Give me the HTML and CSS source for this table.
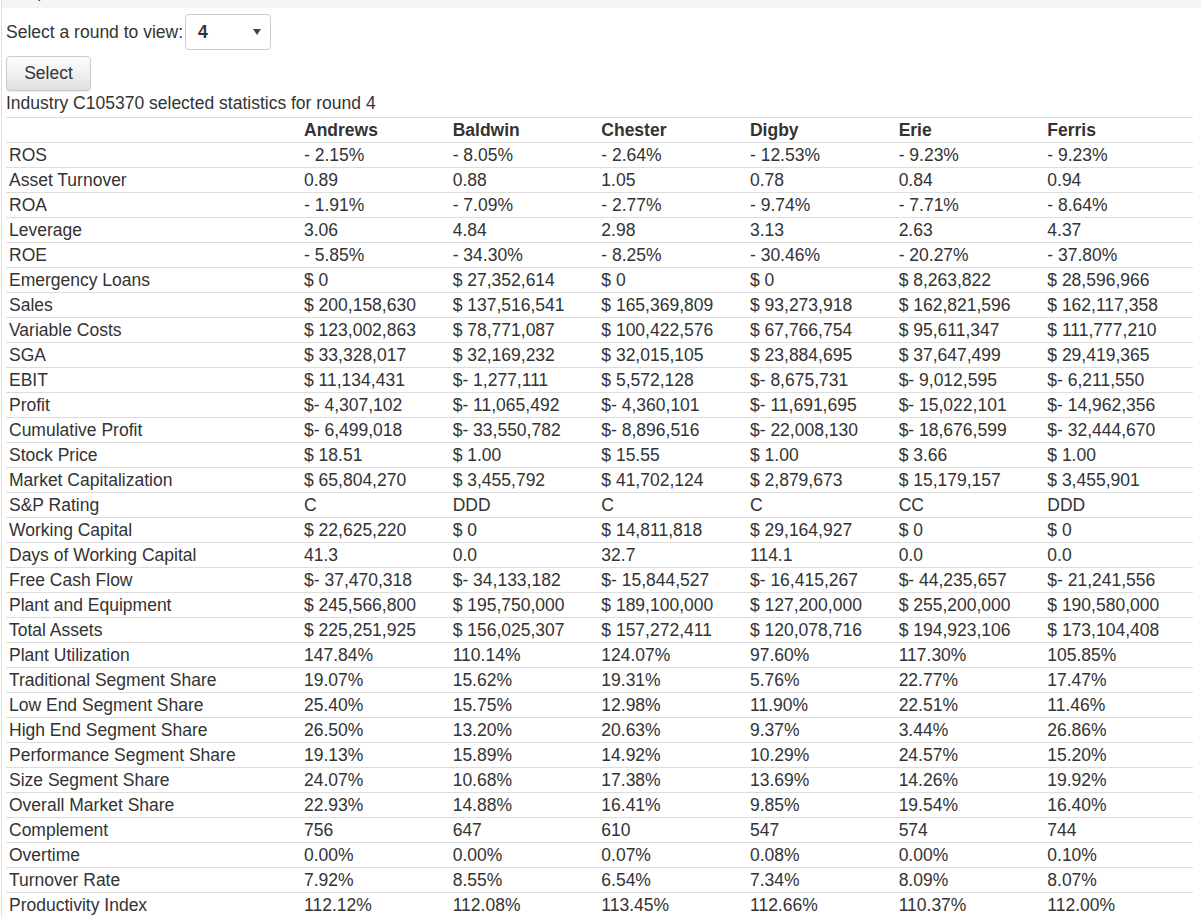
FILE: index.html
```html
<!DOCTYPE html>
<html>
<head>
<meta charset="utf-8">
<title>Industry statistics</title>
<link rel="stylesheet" href="styles.css">
</head>
<body>
<div class="panel">
  <div class="panel-heading"><h3 class="panel-title">Reports</h3></div>
  <div class="panel-body">
    <form class="round-form">
      <div class="round-row">
        <label class="round-label" for="round">Select a round to view:</label>
        <span class="select-wrap">
          <select id="round" class="round-select">
            <option>1</option><option>2</option><option>3</option><option selected>4</option>
          </select>
          <svg class="select-arrow" width="8" height="6" viewBox="0 0 8 6"><path d="M0 0H8L4 6Z" fill="#444"/></svg>
        </span>
      </div>
      <button type="button" class="btn">Select</button>
    </form>
    <div class="caption">Industry C105370 selected statistics for round 4</div>
    <table class="stats">
      <colgroup><col class="col-label"><col><col><col><col><col><col></colgroup>
      <thead>
        <tr><th></th><th>Andrews</th><th>Baldwin</th><th>Chester</th><th>Digby</th><th>Erie</th><th>Ferris</th></tr>
      </thead>
      <tbody>
        <tr><td>ROS</td><td>- 2.15%</td><td>- 8.05%</td><td>- 2.64%</td><td>- 12.53%</td><td>- 9.23%</td><td>- 9.23%</td></tr>
        <tr><td>Asset Turnover</td><td>0.89</td><td>0.88</td><td>1.05</td><td>0.78</td><td>0.84</td><td>0.94</td></tr>
        <tr><td>ROA</td><td>- 1.91%</td><td>- 7.09%</td><td>- 2.77%</td><td>- 9.74%</td><td>- 7.71%</td><td>- 8.64%</td></tr>
        <tr><td>Leverage</td><td>3.06</td><td>4.84</td><td>2.98</td><td>3.13</td><td>2.63</td><td>4.37</td></tr>
        <tr><td>ROE</td><td>- 5.85%</td><td>- 34.30%</td><td>- 8.25%</td><td>- 30.46%</td><td>- 20.27%</td><td>- 37.80%</td></tr>
        <tr><td>Emergency Loans</td><td>$ 0</td><td>$ 27,352,614</td><td>$ 0</td><td>$ 0</td><td>$ 8,263,822</td><td>$ 28,596,966</td></tr>
        <tr><td>Sales</td><td>$ 200,158,630</td><td>$ 137,516,541</td><td>$ 165,369,809</td><td>$ 93,273,918</td><td>$ 162,821,596</td><td>$ 162,117,358</td></tr>
        <tr><td>Variable Costs</td><td>$ 123,002,863</td><td>$ 78,771,087</td><td>$ 100,422,576</td><td>$ 67,766,754</td><td>$ 95,611,347</td><td>$ 111,777,210</td></tr>
        <tr><td>SGA</td><td>$ 33,328,017</td><td>$ 32,169,232</td><td>$ 32,015,105</td><td>$ 23,884,695</td><td>$ 37,647,499</td><td>$ 29,419,365</td></tr>
        <tr><td>EBIT</td><td>$ 11,134,431</td><td>$- 1,277,111</td><td>$ 5,572,128</td><td>$- 8,675,731</td><td>$- 9,012,595</td><td>$- 6,211,550</td></tr>
        <tr><td>Profit</td><td>$- 4,307,102</td><td>$- 11,065,492</td><td>$- 4,360,101</td><td>$- 11,691,695</td><td>$- 15,022,101</td><td>$- 14,962,356</td></tr>
        <tr><td>Cumulative Profit</td><td>$- 6,499,018</td><td>$- 33,550,782</td><td>$- 8,896,516</td><td>$- 22,008,130</td><td>$- 18,676,599</td><td>$- 32,444,670</td></tr>
        <tr><td>Stock Price</td><td>$ 18.51</td><td>$ 1.00</td><td>$ 15.55</td><td>$ 1.00</td><td>$ 3.66</td><td>$ 1.00</td></tr>
        <tr><td>Market Capitalization</td><td>$ 65,804,270</td><td>$ 3,455,792</td><td>$ 41,702,124</td><td>$ 2,879,673</td><td>$ 15,179,157</td><td>$ 3,455,901</td></tr>
        <tr><td>S&amp;P Rating</td><td>C</td><td>DDD</td><td>C</td><td>C</td><td>CC</td><td>DDD</td></tr>
        <tr><td>Working Capital</td><td>$ 22,625,220</td><td>$ 0</td><td>$ 14,811,818</td><td>$ 29,164,927</td><td>$ 0</td><td>$ 0</td></tr>
        <tr><td>Days of Working Capital</td><td>41.3</td><td>0.0</td><td>32.7</td><td>114.1</td><td>0.0</td><td>0.0</td></tr>
        <tr><td>Free Cash Flow</td><td>$- 37,470,318</td><td>$- 34,133,182</td><td>$- 15,844,527</td><td>$- 16,415,267</td><td>$- 44,235,657</td><td>$- 21,241,556</td></tr>
        <tr><td>Plant and Equipment</td><td>$ 245,566,800</td><td>$ 195,750,000</td><td>$ 189,100,000</td><td>$ 127,200,000</td><td>$ 255,200,000</td><td>$ 190,580,000</td></tr>
        <tr><td>Total Assets</td><td>$ 225,251,925</td><td>$ 156,025,307</td><td>$ 157,272,411</td><td>$ 120,078,716</td><td>$ 194,923,106</td><td>$ 173,104,408</td></tr>
        <tr><td>Plant Utilization</td><td>147.84%</td><td>110.14%</td><td>124.07%</td><td>97.60%</td><td>117.30%</td><td>105.85%</td></tr>
        <tr><td>Traditional Segment Share</td><td>19.07%</td><td>15.62%</td><td>19.31%</td><td>5.76%</td><td>22.77%</td><td>17.47%</td></tr>
        <tr><td>Low End Segment Share</td><td>25.40%</td><td>15.75%</td><td>12.98%</td><td>11.90%</td><td>22.51%</td><td>11.46%</td></tr>
        <tr><td>High End Segment Share</td><td>26.50%</td><td>13.20%</td><td>20.63%</td><td>9.37%</td><td>3.44%</td><td>26.86%</td></tr>
        <tr><td>Performance Segment Share</td><td>19.13%</td><td>15.89%</td><td>14.92%</td><td>10.29%</td><td>24.57%</td><td>15.20%</td></tr>
        <tr><td>Size Segment Share</td><td>24.07%</td><td>10.68%</td><td>17.38%</td><td>13.69%</td><td>14.26%</td><td>19.92%</td></tr>
        <tr><td>Overall Market Share</td><td>22.93%</td><td>14.88%</td><td>16.41%</td><td>9.85%</td><td>19.54%</td><td>16.40%</td></tr>
        <tr><td>Complement</td><td>756</td><td>647</td><td>610</td><td>547</td><td>574</td><td>744</td></tr>
        <tr><td>Overtime</td><td>0.00%</td><td>0.00%</td><td>0.07%</td><td>0.08%</td><td>0.00%</td><td>0.10%</td></tr>
        <tr><td>Turnover Rate</td><td>7.92%</td><td>8.55%</td><td>6.54%</td><td>7.34%</td><td>8.09%</td><td>8.07%</td></tr>
        <tr><td>Productivity Index</td><td>112.12%</td><td>112.08%</td><td>113.45%</td><td>112.66%</td><td>110.37%</td><td>112.00%</td></tr>
      </tbody>
    </table>
  </div>
</div>
</body>
</html>
```

FILE: styles.css
```css
html, body {
  margin: 0;
  padding: 0;
  background: #fff;
}
body {
  font-family: "Liberation Sans", Arial, Helvetica, sans-serif;
  font-size: 17.5px;
  line-height: 20px;
  color: #333;
}
.panel {
  margin-left: 1px;
  border-left: 1px solid #ddd;
}
.panel-heading {
  height: 8px;
  overflow: hidden;
  background: #f5f5f5;
  padding: 0 15px;
}
.panel-title {
  margin: -15px 0 0 0;
  font-size: 16px;
  line-height: 16px;
  font-weight: normal;
  color: #333;
}
.panel-body {
  padding: 6px 0 0 4px;
}
.round-form {
  margin: 0;
  display: flex;
  flex-direction: column;
  align-items: flex-start;
  gap: 6px;
}
.round-row {
  display: flex;
  align-items: center;
}
.round-label {
  margin-right: 2px;
}
.select-wrap {
  position: relative;
  display: inline-block;
}
.round-select {
  -webkit-appearance: none;
  appearance: none;
  width: 86px;
  height: 36px;
  border: 1px solid #ccc;
  border-radius: 4px;
  background: #fff;
  padding: 0 0 0 12px;
  font-family: inherit;
  font-size: 17.5px;
  font-weight: bold;
  color: #333;
  outline: none;
}
.select-arrow {
  position: absolute;
  right: 10px;
  top: 15px;
  pointer-events: none;
}
.btn {
  width: 85px;
  height: 35px;
  font-family: inherit;
  font-size: 17.5px;
  color: #333;
  border: 1px solid #ccc;
  border-radius: 4px;
  background-image: linear-gradient(to bottom, #fff 0, #e0e0e0 100%);
  box-shadow: inset 0 1px 0 rgba(255,255,255,.15), 0 1px 1px rgba(0,0,0,.075);
  padding: 0;
  cursor: pointer;
}
.caption {
  margin-top: 1px;
  line-height: 22px;
}
.stats {
  margin-top: 3px;
  width: 1187px;
  border-collapse: collapse;
  border-spacing: 0;
  table-layout: fixed;
}
.col-label {
  width: 295px;
}
.stats th,
.stats td {
  text-align: left;
  padding: 2px 3px;
  line-height: 20px;
  border-top: 1px solid #ddd;
  white-space: nowrap;
  vertical-align: top;
}
.stats th {
  font-weight: bold;
}
```
